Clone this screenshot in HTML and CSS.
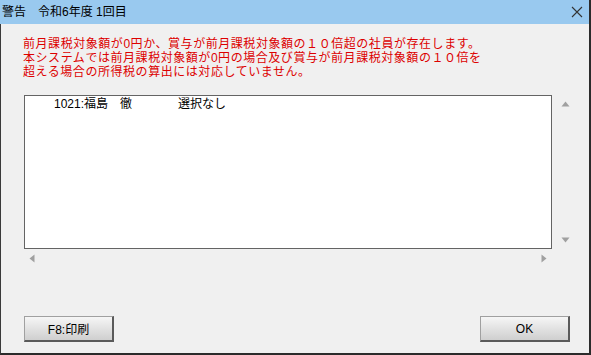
FILE: index.html
```html
<!DOCTYPE html>
<html lang="ja">
<head>
<meta charset="utf-8">
<title>警告</title>
<link rel="stylesheet" href="styles.css">
</head>
<body>
<div class="window">
  <div class="titlebar">
    <span class="title">警告　令和6年度 1回目</span>
    <svg class="close" width="12" height="12" viewBox="0 0 12 12"><path d="M1 1L11 11M11 1L1 11" stroke="#333" stroke-width="1.1" fill="none"/></svg>
  </div>
  <div class="content">
    <div class="message">前月課税対象額が0円か、賞与が前月課税対象額の１０倍超の社員が存在します。<br>本システムでは前月課税対象額が0円の場合及び賞与が前月課税対象額の１０倍を<br>超える場合の所得税の算出には対応していません。</div>
    <div class="listgroup">
      <div class="list">
        <div class="row"><span class="name">1021:福島　徹</span><span>選択なし</span></div>
      </div>
      <div class="vscroll">
        <svg width="9" height="6" viewBox="0 0 9 6"><path d="M4.5 0.5L8.5 5.5H0.5Z" fill="#a0a0a0"/></svg>
        <svg width="9" height="6" viewBox="0 0 9 6"><path d="M4.5 5.5L8.5 0.5H0.5Z" fill="#a0a0a0"/></svg>
      </div>
      <div class="hscroll">
        <svg width="6" height="9" viewBox="0 0 6 9"><path d="M0.5 4.5L5.5 0.5V8.5Z" fill="#a0a0a0"/></svg>
        <svg width="6" height="9" viewBox="0 0 6 9"><path d="M5.5 4.5L0.5 0.5V8.5Z" fill="#a0a0a0"/></svg>
      </div>
    </div>
    <div class="buttons">
      <button class="btn">F8:印刷</button>
      <button class="btn">OK</button>
    </div>
  </div>
</div>
</body>
</html>
```

FILE: styles.css
```css
html, body {
  margin: 0;
  padding: 0;
  background: #f0f0f0;
}
body {
  font-family: "Liberation Sans", "Noto Sans CJK JP", sans-serif;
  font-size: 12px;
  color: #000;
}
.window {
  width: 591px;
  height: 355px;
  display: flex;
  flex-direction: column;
  box-sizing: border-box;
}
.titlebar {
  height: 24px;
  background: #99c9ef;
  display: flex;
  align-items: center;
  justify-content: space-between;
  padding-left: 2px;
  border-right: 2px solid #2b2b2b;
  box-sizing: border-box;
}
.title {
  font-size: 12px;
  line-height: 14px;
}
.close {
  margin-right: 6px;
  margin-bottom: 1px;
}
.content {
  flex: 1;
  display: flex;
  flex-direction: column;
  background: #f0f0f0;
  border-left: 1px solid #3a3a3a;
  border-right: 2px solid #2b2b2b;
  border-bottom: 2px solid #2b2b2b;
  padding: 13px 0 11px 22px;
}
.message {
  color: #dd0000;
  font-size: 12px;
  line-height: 14px;
  letter-spacing: 0.55px;
  white-space: nowrap;
}
.listgroup {
  margin-top: 16px;
  display: grid;
  grid-template-columns: 528px 18px;
  grid-template-rows: 154px 14px;
  column-gap: 4px;
  margin-left: 1px;
}
.list {
  background: #fff;
  border: 1px solid #646464;
  padding: 1px 0 0 29px;
}
.row {
  line-height: 15px;
  white-space: nowrap;
}
.name {
  display: inline-block;
  width: 124px;
}
.vscroll {
  display: flex;
  flex-direction: column;
  justify-content: space-between;
  align-items: center;
  padding: 6px 0 6px;
}
.hscroll {
  display: flex;
  justify-content: space-between;
  align-items: center;
  padding: 4px 5px 0 5px;
}
.buttons {
  margin-top: auto;
  display: flex;
  justify-content: space-between;
  padding-right: 19px;
  padding-left: 1px;
}
.btn {
  width: 90px;
  height: 26px;
  font-family: "Liberation Sans", "Noto Sans CJK JP", sans-serif;
  font-size: 12px;
  color: #000;
  background: linear-gradient(#f6f6f6, #e2e2e2 50%, #cfcfcf);
  border: 1px solid #a0a0a0;
  border-right: 2px solid #5a5a5a;
  border-bottom: 2px solid #5a5a5a;
  padding: 0;
}
```
